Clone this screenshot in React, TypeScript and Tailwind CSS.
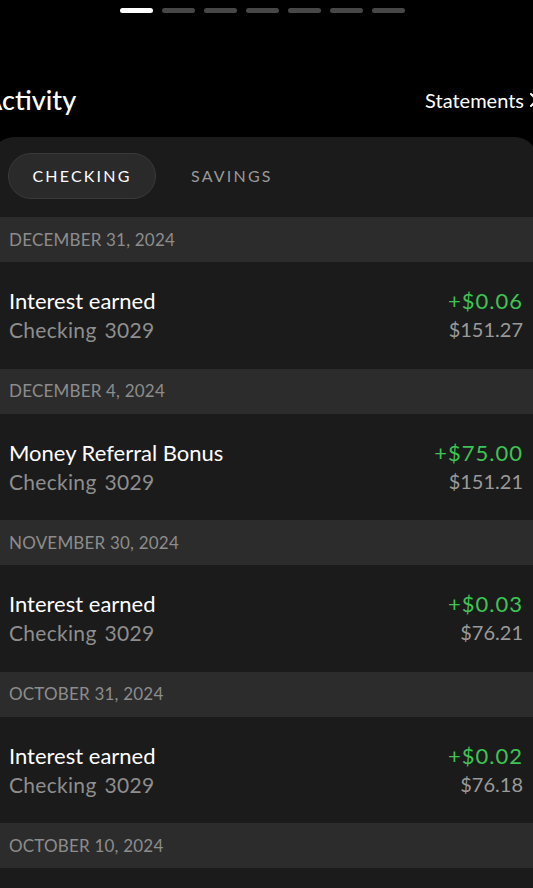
import React from "react";

type Txn = {
  date: string;
  title: string;
  amount: string;
  balance: string;
};

const txns: Txn[] = [
  { date: "DECEMBER 31, 2024", title: "Interest earned", amount: "+$0.06", balance: "$151.27" },
  { date: "DECEMBER 4, 2024", title: "Money Referral Bonus", amount: "+$75.00", balance: "$151.21" },
  { date: "NOVEMBER 30, 2024", title: "Interest earned", amount: "+$0.03", balance: "$76.21" },
  { date: "OCTOBER 31, 2024", title: "Interest earned", amount: "+$0.02", balance: "$76.18" },
];

function Dots() {
  return (
    <div className="flex gap-[9px] pl-[120px] pt-[8px]">
      <div className="h-[5px] w-[33px] rounded-full bg-white" />
      {[0, 1, 2, 3, 4, 5].map((i) => (
        <div key={i} className="h-[5px] w-[33px] rounded-full bg-[#474747]" />
      ))}
    </div>
  );
}

function DateHeader({ label }: { label: string }) {
  return (
    <div className="flex h-[45px] items-center bg-[#2c2c2c] pl-[17px] text-[17px] tracking-[0.2px] text-[#8d8d8d]">
      {label}
    </div>
  );
}

function Row({ t }: { t: Txn }) {
  return (
    <div className="flex h-[106.5px] items-center justify-between pl-[17px] pr-[14px]">
      <div className="flex flex-col">
        <span className="text-[22px] leading-[29px] text-white">{t.title}</span>
        <span className="flex gap-[8px] text-[21px] leading-[29px] tracking-[0.3px] text-[#8e8e8e]">
          <span>Checking</span>
          <span>3029</span>
        </span>
      </div>
      <div className="flex flex-col items-end">
        <span className="text-[22px] leading-[29px] tracking-[1px] text-[#3dc453]">{t.amount}</span>
        <span className="text-[20px] leading-[29px] text-[#9a9a9a]">{t.balance}</span>
      </div>
    </div>
  );
}

export default function App() {
  return (
    <div
      className="h-[888px] w-[533px] overflow-hidden bg-black"
      style={{ fontFamily: "Lato, 'Open Sans', sans-serif" }}
    >
      <Dots />

      <div className="mt-[63px] flex h-[48px] items-center justify-between">
        <h1 className="-ml-[16px] text-[27px] font-medium text-white">Activity</h1>
        <div className="-mr-[6px] flex items-center gap-[5px] text-[20px] text-white">
          <span>Statements</span>
          <svg width="10" height="16" viewBox="0 0 10 16" fill="none">
            <path d="M2 2l6 6-6 6" stroke="white" strokeWidth="2" strokeLinecap="round" strokeLinejoin="round" />
          </svg>
        </div>
      </div>

      <div className="-ml-[8px] mt-[13px] w-[545px] rounded-t-[22px] bg-[#1b1b1b] pt-[16px]">
        <div className="mb-[18px] flex items-center pl-[16px]">
          <button className="flex h-[46px] w-[148px] items-center justify-center rounded-full border border-[#3a3a3a] bg-[#2a2a2a] text-[16px] tracking-[2.2px] text-white">
            CHECKING
          </button>
          <button className="flex h-[46px] items-center px-[35px] text-[16px] tracking-[2.2px] text-[#999999]">
            SAVINGS
          </button>
        </div>

        {txns.map((t) => (
          <div key={t.date}>
            <DateHeader label={t.date} />
            <Row t={t} />
          </div>
        ))}
        <DateHeader label="OCTOBER 10, 2024" />
        <div className="h-[40px]" />
      </div>
    </div>
  );
}
